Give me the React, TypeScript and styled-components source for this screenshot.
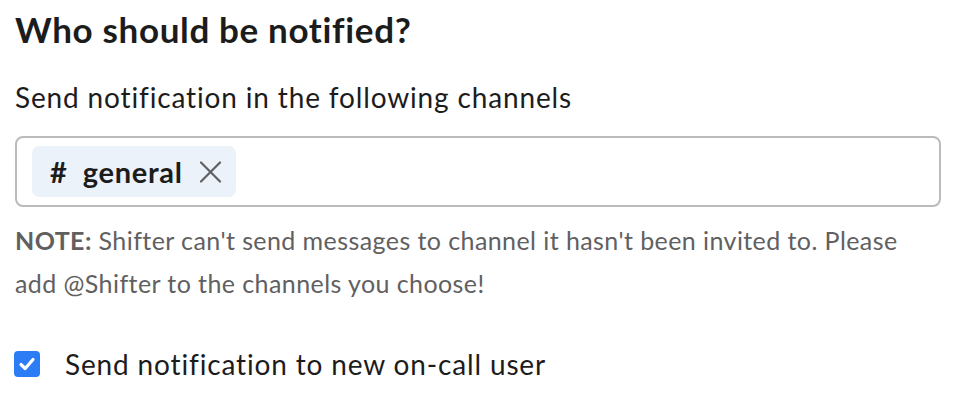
import styled, { createGlobalStyle } from "styled-components";

const GlobalStyle = createGlobalStyle`
body {
  margin: 0;
  background: #ffffff;
  font-family: Lato, "Liberation Sans", sans-serif;
  color: #1d1c1d;
}
`

const App = () => {
    return (
        <Page>
            <GlobalStyle />
            <Heading>Who should be notified?</Heading>
            <Label>Send notification in the following channels</Label>
            <ChannelBox>
                <Chip>
                    <Hash>#</Hash>
                    <ChipName>general</ChipName>
                    <RemoveBtn aria-label="Remove">
                        <svg width="23" height="22" viewBox="0 0 23 22">
                            <path d="M2 1.5 L21 20.5 M21 1.5 L2 20.5" stroke="#616061" strokeWidth="2.2" strokeLinecap="round" />
                        </svg>
                    </RemoveBtn>
                </Chip>
            </ChannelBox>
            <Note>
                <b>NOTE:</b> Shifter can't send messages to channel it hasn't been invited to. Please
                <br />
                add @Shifter to the channels you choose!
            </Note>
            <CheckRow>
                <CheckBox>
                    <svg width="18" height="18" viewBox="0 0 18 18">
                        <path d="M3 9.5 L7.2 13.5 L15 4.5" stroke="#fff" strokeWidth="3.2" fill="none" strokeLinecap="round" strokeLinejoin="round" />
                    </svg>
                </CheckBox>
                <CheckLabel>Send notification to new on-call user</CheckLabel>
            </CheckRow>
        </Page>
    )
}

const Page = styled.div`
width: 956px;
height: 400px;
padding: 0 15px;
box-sizing: border-box;
display: flex;
flex-direction: column;
`

const Heading = styled.h1`
margin: 7px 0 0 0;
font-size: 35px;
font-weight: 700;
line-height: 44px;
letter-spacing: 0.65px;
color: #1d1c1d;
`

const Label = styled.div`
margin-top: 29px;
font-size: 28px;
line-height: 34px;
letter-spacing: 0.85px;
color: #1d1c1d;
`

const ChannelBox = styled.div`
margin-top: 22px;
height: 71px;
box-sizing: border-box;
border: 2px solid #bbbbbb;
border-radius: 8px;
display: flex;
align-items: center;
padding: 0 15px;
`

const Chip = styled.div`
height: 51px;
background: #ebf2f9;
border-radius: 7px;
display: flex;
align-items: center;
padding: 0 14px 0 18px;
gap: 16px;
`

const Hash = styled.span`
font-size: 29px;
font-weight: 700;
color: #1d1c1d;
`

const ChipName = styled.span`
font-size: 29px;
font-weight: 700;
letter-spacing: 0.7px;
color: #1d1c1d;
`

const RemoveBtn = styled.span`
display: flex;
align-items: center;
`

const Note = styled.p`
margin: 12px 0 0 0;
font-size: 25px;
line-height: 43px;
letter-spacing: 0.42px;
white-space: nowrap;
color: #616061;
b {
  font-weight: 700;
}
`

const CheckRow = styled.div`
margin-top: 42px;
height: 34px;
display: flex;
align-items: center;
gap: 25px;
`

const CheckBox = styled.div`
width: 26px;
height: 26px;
border-radius: 4px;
background: #2c7cf6;
display: flex;
align-items: center;
justify-content: center;
margin-left: -1px;
`

const CheckLabel = styled.span`
font-size: 28px;
line-height: 34px;
letter-spacing: 0.85px;
color: #1d1c1d;
`

export default App
